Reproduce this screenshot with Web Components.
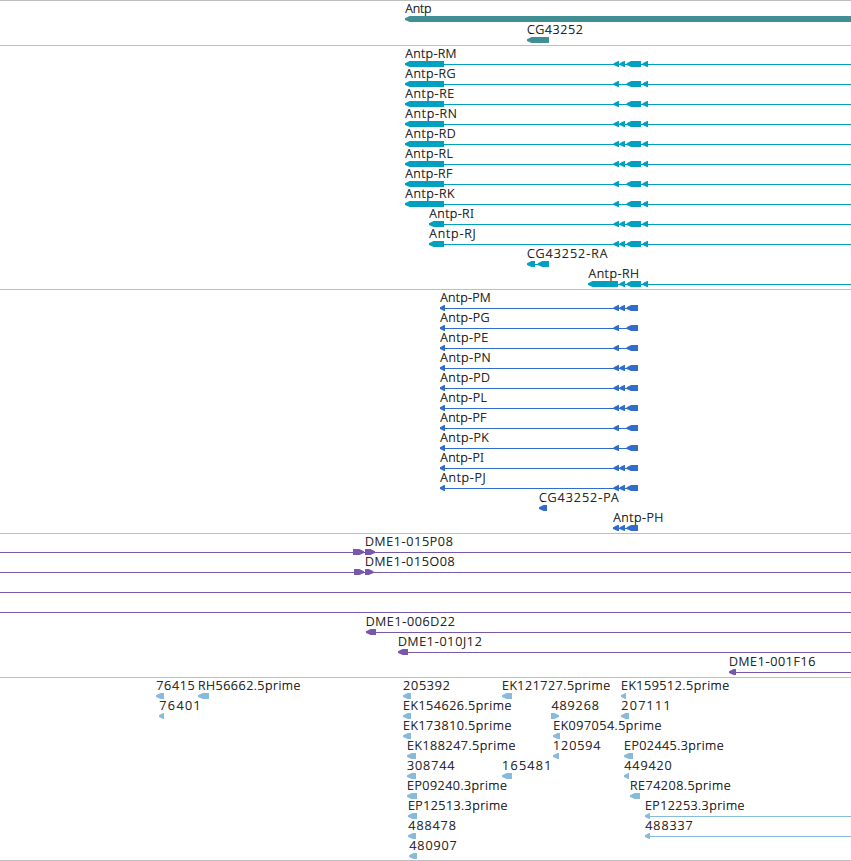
<!DOCTYPE html>
<html lang="en">
<head>
<meta charset="utf-8">
<title>Antp region</title>
<style>
html,body{margin:0;background:#fff}
body{width:851px;height:861px;overflow:hidden}
</style>
</head>
<body>
<genome-view></genome-view>
<script>
// A feature is [label, inkStart, inkEnd, line, exons, strand]; line = [from,to], exon = [from,to].
const W = 851;
const pen = document.createElement('canvas').getContext('2d');
const FONT = '300 12.5px "Noto Sans"';
const flags = { M:2, G:1, E:1, N:2, D:2, L:2, F:1, K:1, I:2, J:2 };
const small = n => n === 2 ? [[613.6,619],[619.6,625]] : [[613.6,619]];
const end = [[626.6,641],[642.6,648]];
const rEnds = { M:455.6, G:455.5, E:454.3, N:455.8, D:455.8, L:453.4, F:453, K:455, I:474, J:474.6 };
const pEnds = { M:489.7, G:489.5, E:488.3, N:489.5, D:490, L:487.4, F:487, K:489.3, I:484, J:484.4 };
const f = (label, a, b, exons, line, dir = 'left') => ({ label, a, b, exons, line, dir });

const tracks = [
  { color:'#3f8f94', height:45, pitch:21, rows:[
    [f('Antp',405.3,431,[[405,860]])],
    [f('CG43252',527.7,582.7,[[527,549]])]] },
  { color:'#00a0c0', height:244, pitch:20, rows:[
    ...Object.keys(flags).map(k => {
      const s = 'IJ'.includes(k) ? 429 : 405;
      return [f('Antp-R' + k, s + .3, rEnds[k], [[s,444],...small(flags[k]),...end], [s,W])];
    }),
    [f('CG43252-RA',527.7,607.7,[[527,535],[537.7,549]],[527,549])],
    [f('Antp-RH',588.5,638,[[588,618],[619.6,625],...end],[588,W])]] },
  { color:'#306ccc', height:244, pitch:20, rows:[
    ...Object.keys(flags).map(k =>
      [f('Antp-P' + k, 440.3, pEnds[k], [[440,445],...small(flags[k]),[626.6,638]],[440,638])]),
    [f('CG43252-PA',539.6,619,[[539,547]])],
    [f('Antp-PH',613.3,662.3,[[613,619],[619.6,625],[626.6,638]],[613,638])]] },
  { color:'#7858a8', height:144, pitch:20, rows:[
    [f('DME1-015P08',366,452.7,[[353,364],[365,375]],[0,W],'right')],
    [f('DME1-015O08',366,454.5,[[354,364],[365,373.5]],[0,W],'right')],
    [f('',0,0,[],[0,W])],
    [f('',0,0,[],[0,W])],
    [f('DME1-006D22',366.7,454.7,[[366,376]],[366,W])],
    [f('DME1-010J12',399,481.7,[[398,408]],[398,W])],
    [f('DME1-001F16',730,815.3,[[729,736]],[729,W])]] },
  { color:'#88bbdb', height:183, pitch:20, rows:[
    [f('76415',157,194.5,[[156,164]]), f('RH56662.5prime',199,300.5,[[198,209]]),
     f('205392',403.7,449.7,[[403,411]]), f('EK121727.5prime',503,610.2,[[502,512]]),
     f('EK159512.5prime',622,729.3,[[621,626]])],
    [f('76401',160,198.5,[[159,164]]), f('EK154626.5prime',404,511.5,[[403,411]]),
     f('489268',552.2,598.7,[[551,559]],null,'right'), f('207111',622,668.5,[[621,629]])],
    [f('EK173810.5prime',404,511.5,[[403,411]]), f('EK097054.5prime',554.2,661.5,[[553,560]])],
    [f('EK188247.5prime',408,515.5,[[407,416]]), f('120594',554.8,600.2,[[553,559]]),
     f('EP02445.3prime',625,723.7,[[624,633]])],
    [f('308744',407.7,454.3,[[407,416]]), f('165481',503.8,549.2,[[502,512]]),
     f('449420',625,671.5,[[624,629]])],
    [f('EP09240.3prime',408,507,[[407,417]]), f('RE74208.5prime',631,730.7,[[630,640]])],
    [f('EP12513.3prime',409,507.5,[[408,417]]), f('EP12253.3prime',646,744.5,[[645,650]],[645,W])],
    [f('488478',409,455.7,[[408,416]]), f('488337',646,692.5,[[645,650]],[645,W])],
    [f('480907',410,456.5,[[409,417]])]] }
];

// One labelled feature: text above an intron line and its directional exons.
class GenomeFeature extends HTMLElement {
  connectedCallback() {
    const { label, a, b, exons, line, dir } = this.data;
    let text = '';
    if (label) {
      pen.font = FONT;
      const m = pen.measureText(label);
      const from = /^[ADER]/.test(label) ? a : a - .7;
      const spacing = (b - from - (m.actualBoundingBoxRight + m.actualBoundingBoxLeft)) / (label.length - 1);
      text = `<text x="${from + m.actualBoundingBoxLeft}" y="13" letter-spacing="${spacing.toFixed(3)}">${label}</text>`;
    }
    const arrow = ([s, e]) => {
      const h = Math.min(4.6, e - s - .8), left = dir === 'left';
      const t = left ? s : e, k = left ? 1 : -1, z = left ? e : s;
      return `<polygon points="${t},20 ${t},18.3 ${t + k*h},16 ${z},16 ${z},22 ${t + k*h},22"/>`;
    };
    this.attachShadow({ mode:'open' }).innerHTML = `
      <style>
        :host{display:block;grid-area:1/1;height:24px}
        svg{display:block;overflow:visible;fill:var(--track)}
        text{font:${FONT},sans-serif;fill:#000;stroke:#000;stroke-width:.2px}
      </style>
      <svg width="${W}" height="24">
        ${line ? `<rect x="${line[0]}" y="19" width="${line[1]-line[0]}" height="1"/>` : ''}
        ${exons.map(arrow).join('')}${text}
      </svg>`;
  }
}
customElements.define('genome-feature', GenomeFeature);

class GenomeRow extends HTMLElement {
  connectedCallback() {
    this.attachShadow({ mode:'open' }).innerHTML =
      `<style>:host{display:grid;height:var(--pitch)}</style>`;
    for (const d of this.data) {
      const el = document.createElement('genome-feature');
      el.data = d;
      this.shadowRoot.append(el);
    }
  }
}
customElements.define('genome-row', GenomeRow);

class GenomeTrack extends HTMLElement {
  connectedCallback() {
    this.attachShadow({ mode:'open' }).innerHTML = `
      <style>:host{display:block;box-sizing:border-box}
      hr{height:1px;margin:0 0 -1px;border:0;background:#bfbfbf}</style><hr><slot></slot>`;
  }
}
customElements.define('genome-track', GenomeTrack);

class GenomeView extends HTMLElement {
  connectedCallback() {
    this.attachShadow({ mode:'open' }).innerHTML = `
      <style>:host{display:flex;flex-direction:column;width:${W}px;height:861px;box-sizing:border-box;border-bottom:1px solid #bfbfbf;background:#fff}
      genome-track{flex:none}</style>`;
    for (const t of tracks) {
      const track = document.createElement('genome-track');
      track.style.cssText = `height:${t.height}px;--track:${t.color};--pitch:${t.pitch}px`;
      for (const r of t.rows) {
        const row = document.createElement('genome-row');
        row.data = r;
        track.append(row);
      }
      this.shadowRoot.append(track);
    }
  }
}
customElements.define('genome-view', GenomeView);
</script>
</body>
</html>
